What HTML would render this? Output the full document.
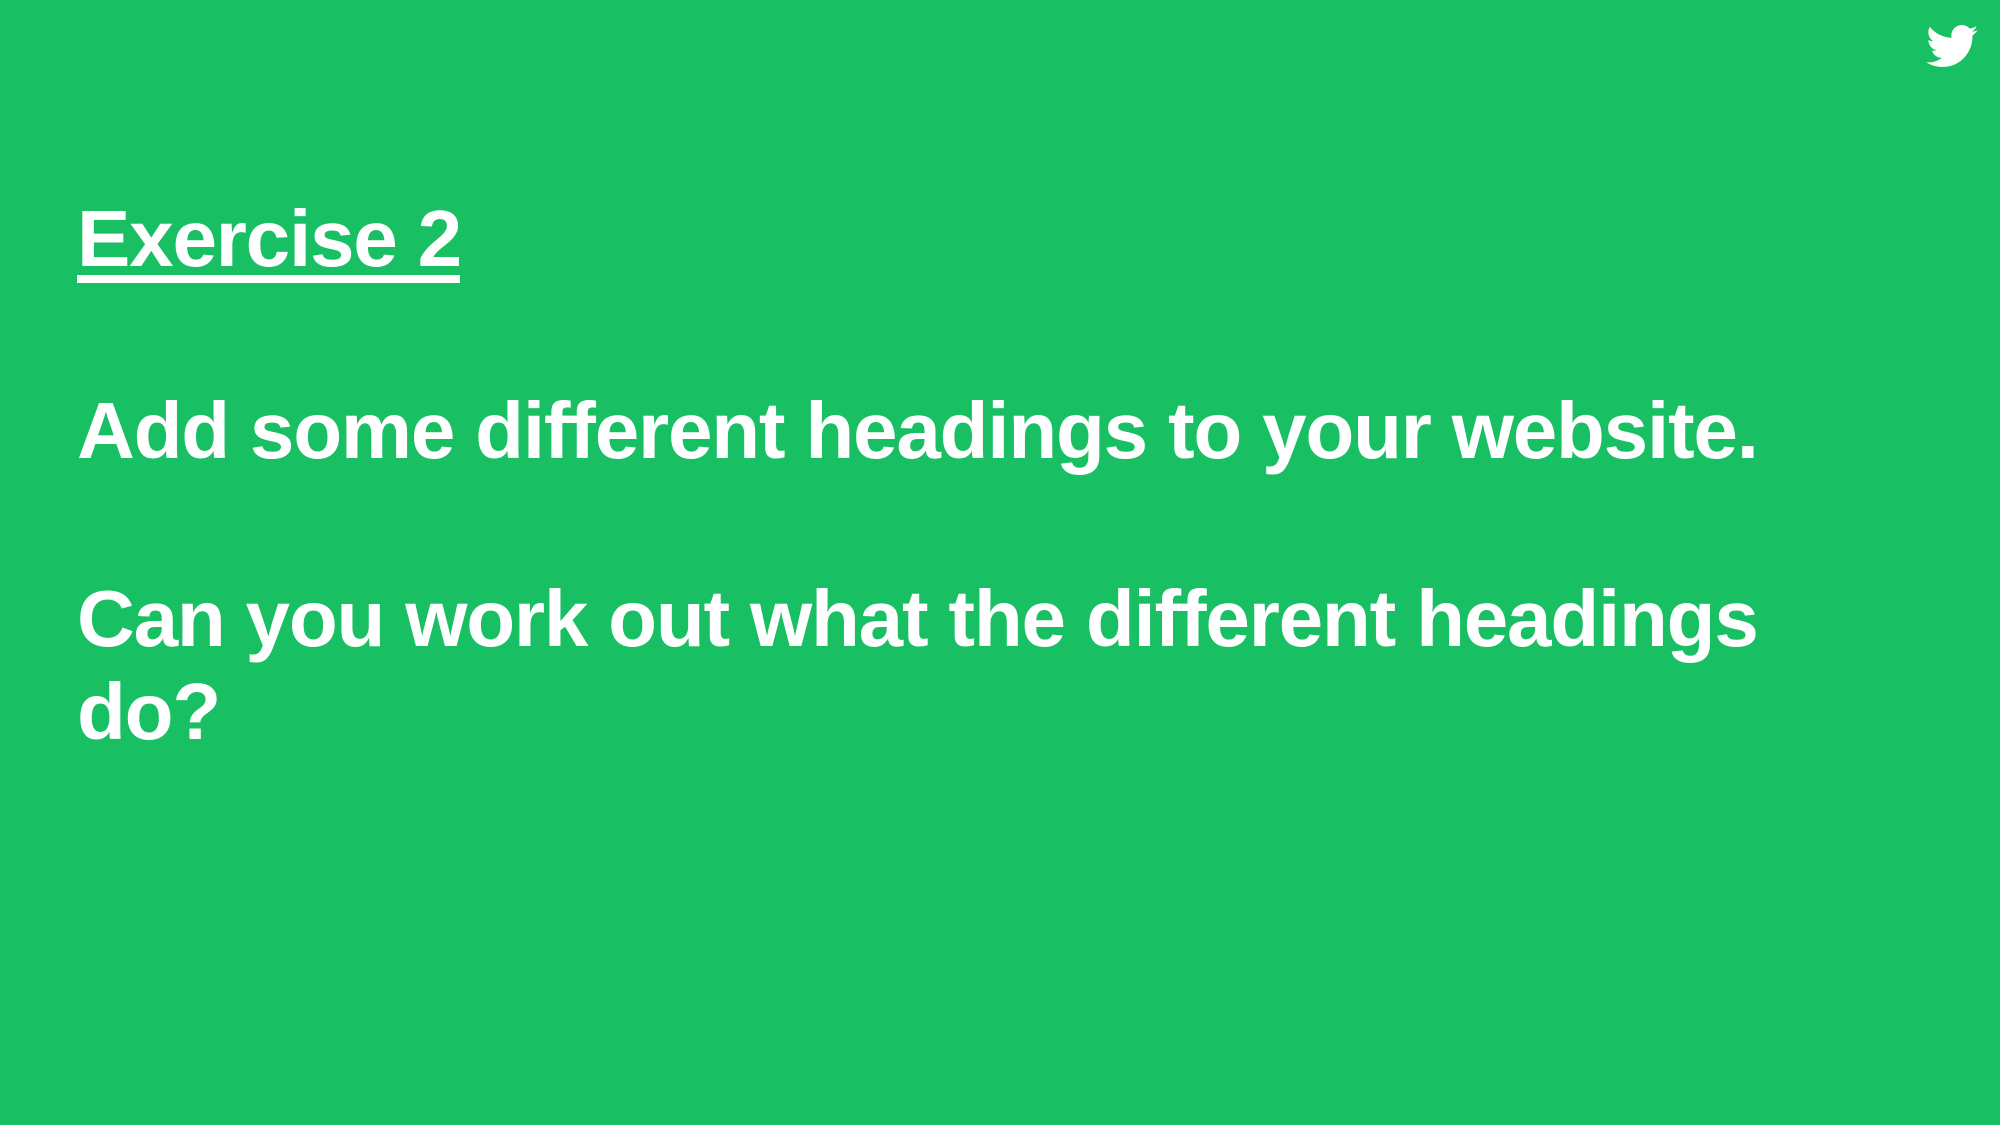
<!DOCTYPE html>
<html><head><style>
html,body{margin:0;padding:0}
body{width:2000px;height:1125px;background:#19bf63;position:relative;overflow:hidden;font-family:"Liberation Sans",Arial,sans-serif;font-weight:bold;color:#fff}
.t{position:absolute;left:77px;font-size:80px;line-height:93px;letter-spacing:-1.2px;white-space:nowrap}
.u{position:absolute;left:77px;top:275px;width:383px;height:8px;background:#fff}
</style></head><body>
<div class="t" style="top:192px">Exercise 2</div>
<div class="u"></div>
<div class="t" style="top:384px">Add some different headings to your website.</div>
<div class="t" style="top:572px">Can you work out what the different headings<br>do?</div>
<svg style="position:absolute;left:1926px;top:25px" width="52" height="43" viewBox="0 0 24 20"><path fill="#fff" d="M24 2.4c-.9.4-1.8.6-2.8.8 1-.6 1.8-1.6 2.2-2.7-1 .6-2 1-3.1 1.2C19.3.7 18 0 16.6 0c-2.7 0-4.9 2.2-4.9 4.9 0 .4 0 .8.1 1.1C7.7 5.8 4.1 3.9 1.7.9c-.4.7-.7 1.6-.7 2.5 0 1.7.9 3.2 2.2 4.1-.8 0-1.6-.2-2.2-.6v.1c0 2.4 1.7 4.4 3.900 4.8-.4.1-.8.2-1.3.2-.3 0-.6 0-.9-.1.6 2 2.4 3.4 4.6 3.4-1.7 1.3-3.8 2.1-6.1 2.1-.4 0-.8 0-1.2-.1 2.2 1.4 4.8 2.2 7.5 2.2 9.1 0 14-7.5 14-14v-.6c1-.7 1.8-1.6 2.5-2.5z"/></svg>
</body></html>
